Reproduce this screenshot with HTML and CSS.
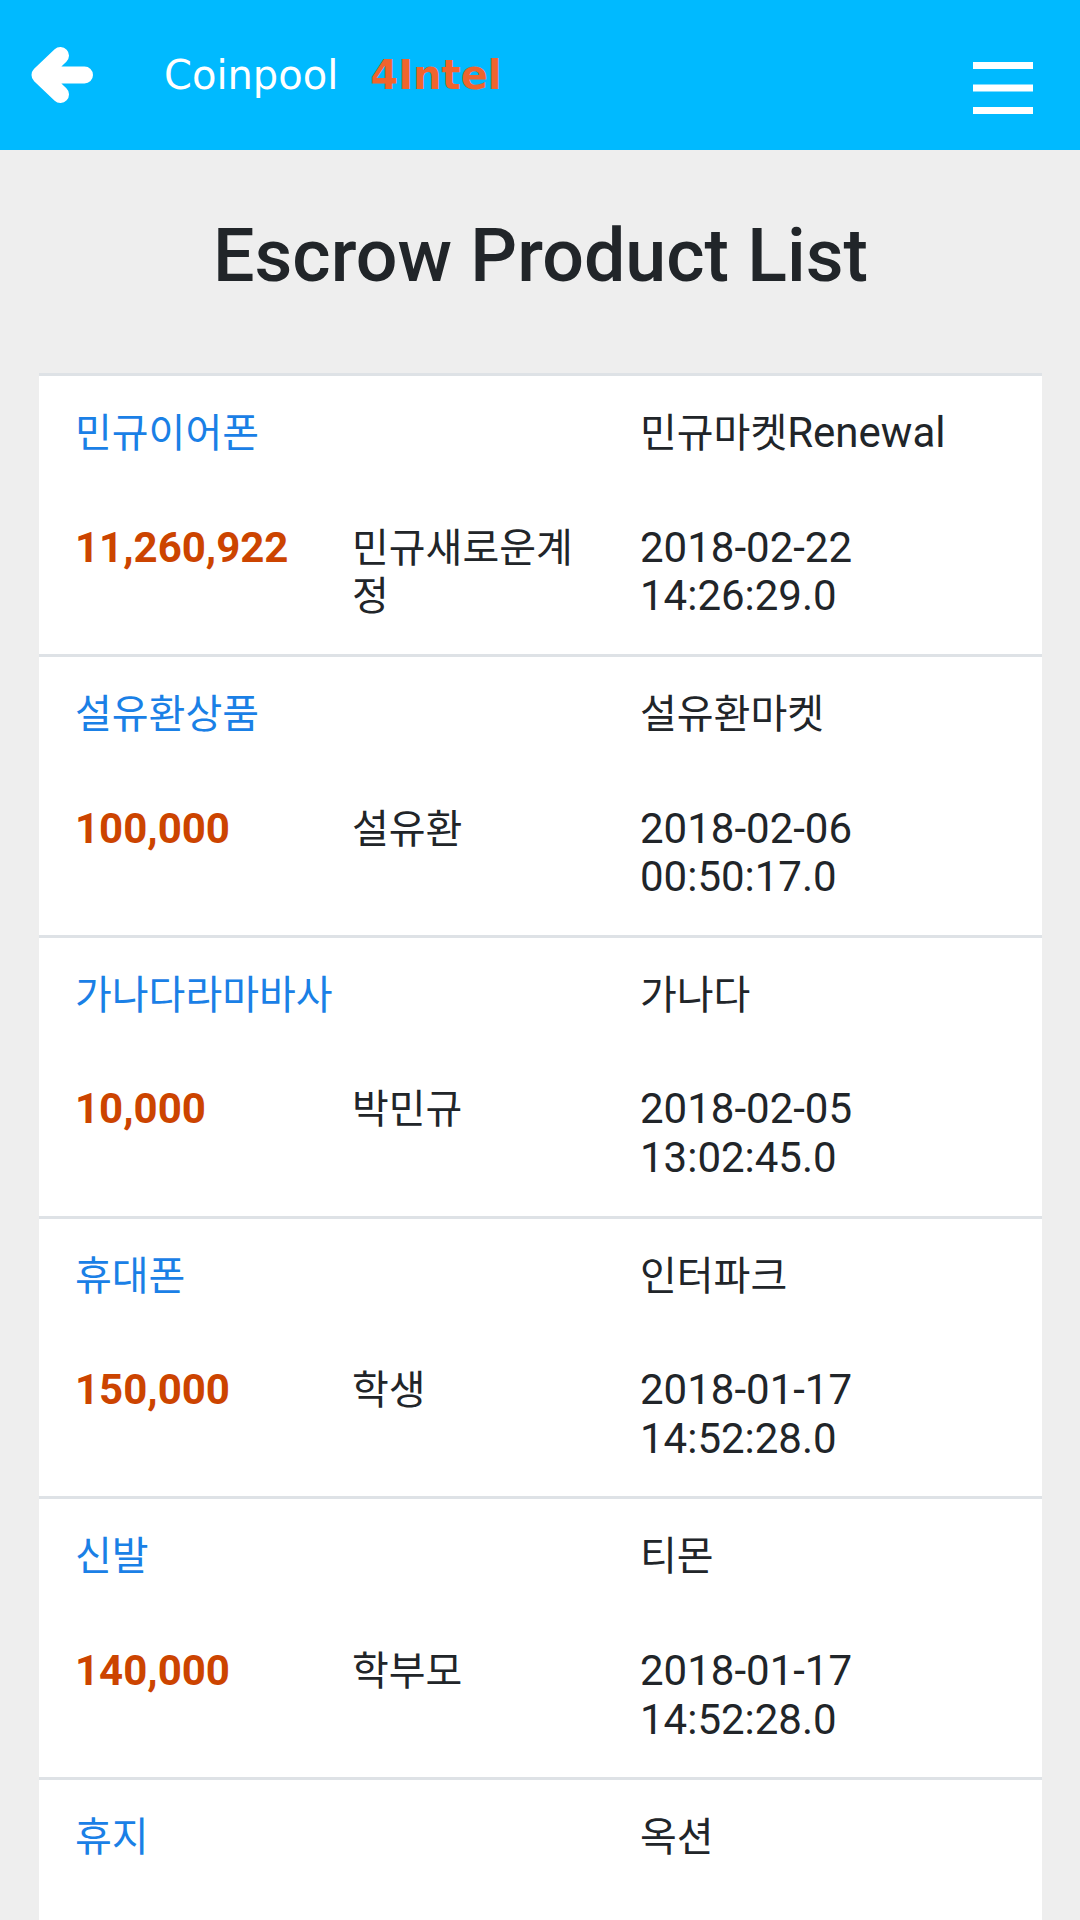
FILE: index.html
```html
<!DOCTYPE html>
<html lang="ko">
<head>
<meta charset="utf-8">
<title>Escrow Product List</title>
<link rel="stylesheet" href="styles.css">
</head>
<body>
<header class="topbar">
  <a class="back" href="#" aria-label="back">
    <svg width="64" height="56" viewBox="0 0 64 56">
      <path d="M10 28 H54.5 M30.5 8.5 L10 28 L30.5 47.5" fill="none" stroke="#fff" stroke-width="17" stroke-linecap="round" stroke-linejoin="round"/>
    </svg>
  </a>
  <div class="brand"><span class="brand-name">Coinpool</span><span class="brand-accent">4Intel</span></div>
  <button class="menu" aria-label="menu">
    <svg width="60" height="52" viewBox="0 0 60 52">
      <path d="M0 3.5 H60 M0 26 H60 M0 48.5 H60" stroke="#fff" stroke-width="7"/>
    </svg>
  </button>
</header>
<main class="content">
  <h1 class="page-title">Escrow Product List</h1>
  <div class="product-list">
    <div class="product">
      <div class="cell name"><span class="ko">민규이어폰</span></div>
      <div class="cell market"><span class="ko">민규마켓</span>Renewal</div>
      <div class="cell price">11,260,922</div>
      <div class="cell seller"><span class="ko">민규새로운계정</span></div>
      <div class="cell date">2018-02-22 14:26:29.0</div>
    </div>
    <div class="product">
      <div class="cell name"><span class="ko">설유환상품</span></div>
      <div class="cell market"><span class="ko">설유환마켓</span></div>
      <div class="cell price">100,000</div>
      <div class="cell seller"><span class="ko">설유환</span></div>
      <div class="cell date">2018-02-06 00:50:17.0</div>
    </div>
    <div class="product">
      <div class="cell name"><span class="ko">가나다라마바사</span></div>
      <div class="cell market"><span class="ko">가나다</span></div>
      <div class="cell price">10,000</div>
      <div class="cell seller"><span class="ko">박민규</span></div>
      <div class="cell date">2018-02-05 13:02:45.0</div>
    </div>
    <div class="product">
      <div class="cell name"><span class="ko">휴대폰</span></div>
      <div class="cell market"><span class="ko">인터파크</span></div>
      <div class="cell price">150,000</div>
      <div class="cell seller"><span class="ko">학생</span></div>
      <div class="cell date">2018-01-17 14:52:28.0</div>
    </div>
    <div class="product">
      <div class="cell name"><span class="ko">신발</span></div>
      <div class="cell market"><span class="ko">티몬</span></div>
      <div class="cell price">140,000</div>
      <div class="cell seller"><span class="ko">학부모</span></div>
      <div class="cell date">2018-01-17 14:52:28.0</div>
    </div>
    <div class="product">
      <div class="cell name"><span class="ko">휴지</span></div>
      <div class="cell market"><span class="ko">옥션</span></div>
      <div class="cell price">&nbsp;</div>
      <div class="cell seller">&nbsp;</div>
      <div class="cell date">&nbsp;<br>&nbsp;</div>
    </div>
  </div>
</main>
</body>
</html>
```

FILE: styles.css
```css
body {
  margin: 0;
  background: #eeeeee;
  font-family: Roboto, "Noto Sans CJK KR", sans-serif;
  color: #212529;
}

.topbar {
  height: 150px;
  background: #00baff;
  display: flex;
  align-items: center;
}

.back {
  margin-left: 30px;
  display: flex;
}

.brand {
  margin-left: 70px;
  font-family: "DejaVu Sans", sans-serif;
  font-size: 40px;
  color: #ffffff;
  display: flex;
  align-items: baseline;
}

.brand-accent {
  margin-left: 32px;
  font-weight: bold;
  color: #f0642d;
}

.menu {
  margin-left: auto;
  margin-right: 47px;
  margin-top: 26px;
  background: none;
  border: 0;
  padding: 0;
  display: flex;
}

.content {
  padding: 62px 38px 0 39px;
}

.page-title {
  margin: 0 0 73px;
  font-size: 73.5px;
  font-weight: 500;
  line-height: 1.2;
  text-align: center;
  color: #212529;
}

.product-list {
  background: #ffffff;
}

.product {
  display: grid;
  grid-template-columns: 281px 288px 1fr;
  border-top: 3px solid #dee2e6;
  font-size: 42px;
  line-height: 48.6px;
}

.cell {
  padding: 33px 32px;
}

.name,
.price {
  padding-left: 36px;
}

.name {
  grid-column: 1 / span 2;
  color: #1a80e6;
}

.price {
  color: #cc4400;
  font-weight: 700;
}

.seller {
  padding-right: 8px;
}

.ko {
  font-size: 40px;
  line-height: 40px;
}
```
